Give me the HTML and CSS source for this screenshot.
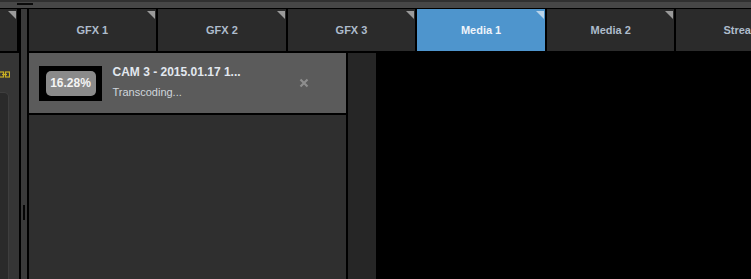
FILE: index.html
```html
<!DOCTYPE html>
<html>
<head>
<meta charset="utf-8">
<link rel="stylesheet" href="styles.css">
</head>
<body>
<div class="topbar"><span class="grip"></span></div>
<div class="main">
  <div class="leftcol">
    <div class="tab-partial"><span class="corner"></span></div>
    <div class="leftpanel">
      <svg class="link" width="11" height="7" viewBox="0 0 11 7">
        <rect x="0.5" y="1" width="4" height="5" fill="none" stroke="#c9b024" stroke-width="1.2"/>
        <rect x="6.5" y="1" width="4" height="5" fill="none" stroke="#c9b024" stroke-width="1.2"/>
        <line x1="3" y1="3.5" x2="8" y2="3.5" stroke="#c9b024" stroke-width="1.2"/>
      </svg>
      <div class="leftbox"></div>
    </div>
  </div>
  <div class="divider"><span class="handle"></span></div>
  <div class="content">
    <div class="tabs">
      <div class="tab">GFX 1<span class="corner"></span></div>
      <div class="tab">GFX 2<span class="corner"></span></div>
      <div class="tab">GFX 3<span class="corner"></span></div>
      <div class="tab active">Media 1<span class="corner"></span></div>
      <div class="tab">Media 2<span class="corner"></span></div>
      <div class="tab last">Strea</div>
    </div>
    <div class="body">
      <div class="list">
        <div class="card">
          <div class="thumb"><div class="pill">16.28%</div></div>
          <div class="info">
            <div class="title">CAM 3 - 2015.01.17 1...</div>
            <div class="sub">Transcoding...</div>
          </div>
          <svg class="close" width="10" height="10" viewBox="0 0 10 10">
            <path d="M1.5 1.5 L8.5 8.5 M8.5 1.5 L1.5 8.5" stroke="#8e8e8e" stroke-width="2.2" stroke-linecap="butt"/>
          </svg>
        </div>
        <div class="listrest"></div>
      </div>
      <div class="column"></div>
      <div class="preview"></div>
    </div>
  </div>
</div>
</body>
</html>
```
FILE: styles.css
```css
html, body {
  margin: 0;
  padding: 0;
  background: #000;
  width: 751px;
  height: 279px;
  overflow: hidden;
  font-family: "Liberation Sans", Arial, sans-serif;
}
.topbar {
  height: 6px;
  background: #474747;
  border-top: 2px solid #303030;
  border-bottom: 1px solid #000;
  display: flex;
  align-items: flex-start;
}
.grip {
  display: block;
  margin: 1px 0 0 17px;
  width: 16px;
  height: 2px;
  background: #0a0a0a;
}
.main {
  display: flex;
  height: 270px;
}
.leftcol {
  width: 20px;
  display: flex;
  flex-direction: column;
  background: #000;
}
.tab-partial {
  position: relative;
  width: 17px;
  height: 42px;
  background: #2b2b2b;
}
.leftpanel {
  margin-top: 2px;
  flex: 1;
  background: #353535;
  display: flex;
  flex-direction: column;
}
.link {
  display: block;
  margin: 18px 0 0 -1px;
}
.leftbox {
  margin-top: 14px;
  width: 8px;
  flex: 1;
  background: #2a2a2a;
  border: 1px solid #3e3e3e;
  border-left: none;
  border-bottom: none;
  border-top-right-radius: 5px;
}
.divider {
  position: relative;
  width: 6px;
  background: #3a3a3a;
  border-left: 2px solid #000;
  border-right: 2px solid #000;
}
.handle {
  position: absolute;
  left: 2px;
  top: 196px;
  width: 2px;
  height: 15px;
  background: #050505;
}
.content {
  flex: 1;
  display: flex;
  flex-direction: column;
}
.tabs {
  display: flex;
  gap: 2px;
  height: 42px;
  background: #000;
}
.tab {
  position: relative;
  flex: 0 0 127.6px;
  background: #2b2b2b;
  color: #aebccb;
  font-weight: bold;
  font-size: 11px;
  display: flex;
  align-items: center;
  justify-content: center;
}
.tab.last {
  flex: 1 0 auto;
  justify-content: flex-start;
  padding-left: 47px;
}
.tab.active {
  background: #4e95cd;
  color: #eef4fa;
}
.corner {
  position: absolute;
  top: 2px;
  right: 1px;
  width: 0;
  height: 0;
  border-top: 8px solid #9a9a9a;
  border-left: 8px solid transparent;
}
.tab.active .corner {
  border-top-color: #b9d4ea;
}
.body {
  margin-top: 2px;
  flex: 1;
  display: flex;
}
.list {
  width: 317px;
  border-right: 2px solid #000;
  display: flex;
  flex-direction: column;
}
.card {
  height: 60px;
  background: #5b5b5b;
  border-bottom: 2px solid #000;
  display: flex;
  align-items: center;
}
.thumb {
  margin-left: 10px;
  width: 63px;
  height: 35px;
  background: #000;
  display: flex;
  align-items: center;
  padding-left: 7px;
  box-sizing: border-box;
}
.pill {
  width: 50px;
  height: 25px;
  border-radius: 5px;
  background: #8a8a8a;
  color: #f4f4f4;
  font-weight: bold;
  font-size: 12px;
  display: flex;
  align-items: center;
  justify-content: center;
}
.info {
  margin-left: 11px;
  align-self: flex-start;
  margin-top: 12px;
}
.title {
  color: #e2e8ef;
  font-weight: bold;
  font-size: 12px;
  line-height: 14px;
}
.sub {
  margin-top: 6px;
  color: #d0d6dc;
  font-size: 11px;
  line-height: 14px;
}
.close {
  margin-left: auto;
  margin-right: 37px;
}
.listrest {
  flex: 1;
  background: #2f2f2f;
}
.column {
  width: 28px;
  background: #262626;
}
.preview {
  flex: 1;
  background: #000;
}
```
